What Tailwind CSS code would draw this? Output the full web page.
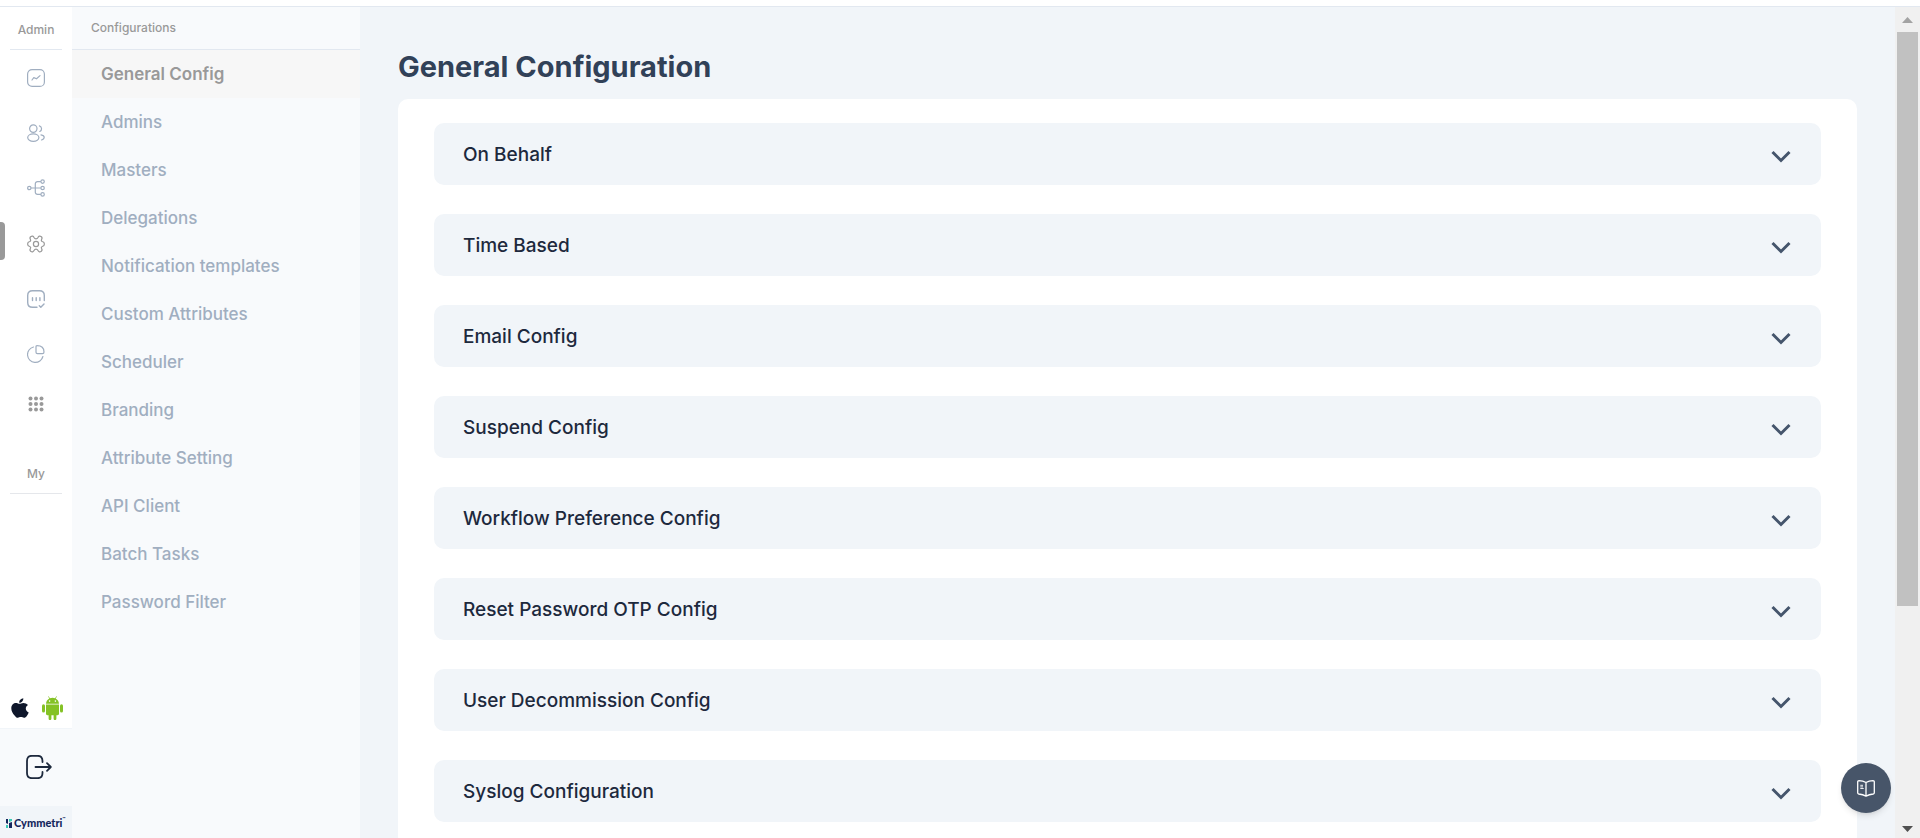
<!DOCTYPE html>
<html lang="en">
<head>
<meta charset="utf-8">
<meta name="viewport" content="width=device-width, initial-scale=1">
<title>General Configuration</title>
<script src="https://cdn.jsdelivr.net/npm/@tailwindcss/browser@4"></script>
</head>
<body class="flex h-screen flex-col overflow-hidden bg-white font-['Inter',sans-serif]">
<div class="h-[7px] shrink-0 border-b border-slate-200"></div>
<div class="flex min-h-0 flex-1">

  <!-- Icon rail -->
  <nav aria-label="Primary" class="flex w-[72px] shrink-0 flex-col text-[#a0aec0]">
    <div class="mx-[10px] flex h-[43px] items-center justify-center border-b border-slate-200 pt-1 text-xs font-medium text-[#999]">Admin</div>
    <div class="flex flex-col pr-px">
      <a href="#" aria-label="Dashboard" class="flex h-[55px] items-center justify-center">
        <svg class="size-[18px]" viewBox="0 0 18 18" fill="none" stroke="currentColor" stroke-width="1.2" stroke-linecap="round" stroke-linejoin="round"><rect x=".6" y=".6" width="16.8" height="16.8" rx="4.5"/><path d="M5 11l1.800-2.400 2.700 1.200L13 6.600"/></svg>
      </a>
      <a href="#" aria-label="Users" class="flex h-[55px] items-center justify-center">
        <svg class="size-[18px]" viewBox="0 0 18 18" fill="none" stroke="currentColor" stroke-width="1.2" stroke-linecap="round"><circle cx="6.3" cy="4.6" r="3.7"/><ellipse cx="6.3" cy="13.6" rx="5.6" ry="3.7"/><path d="M12.400 1.900a3 3 0 0 1 .4 5.600M14 10.800c1.900.3 3.200 1.300 3.200 2.500s-1.100 2.200-2.700 2.700"/></svg>
      </a>
      <a href="#" aria-label="Workflows" class="flex h-14 items-center justify-center">
        <svg class="size-[18px]" viewBox="0 0 18 18" fill="none" stroke="currentColor" stroke-width="1.2"><circle cx="2.3" cy="9" r="1.7"/><circle cx="15.6" cy="2.6" r="1.7"/><circle cx="15.6" cy="9" r="1.7"/><circle cx="15.6" cy="15.4" r="1.7"/><path d="M4 9h9.900M13.900 2.600h-3.400a2.200 2.200 0 0 0-2.200 2.200v8.400a2.200 2.200 0 0 0 2.200 2.200h3.400"/></svg>
      </a>
      <a href="#" aria-label="Configurations" aria-current="page" class="relative flex h-[55px] items-center justify-center text-[#999]">
        <span class="absolute top-[6px] left-0 h-[38px] w-[5px] rounded-r bg-[#999]"></span>
        <svg class="size-[18px]" viewBox="0 0 18 18" fill="none" stroke="currentColor" stroke-width="1.2" stroke-linejoin="round"><circle cx="9" cy="9" r="2.6"/><path d="M7 2.500C6.300 1 4.900.8 3.900 1.600 2.800 2.400 2.700 3.500 3.500 4.700c.4.700.1 1.500-.8 1.800C1.200 6.900.6 7.800.6 9s.6 2.100 2.100 2.500c.9.300 1.200 1.100.8 1.800-.8 1.200-.7 2.300.4 3.100 1 .8 2.400.6 3.100-.9.500-1 .9-1.300 2-1.300s1.500.3 2 1.300c.7 1.500 2.100 1.700 3.100.9 1.100-.8 1.200-1.900.4-3.100-.4-.7-.1-1.500.8-1.800 1.500-.4 2.100-1.300 2.100-2.500s-.6-2.100-2.100-2.500c-.9-.3-1.200-1.100-.8-1.800.8-1.200.7-2.300-.4-3.100-1-.8-2.400-.6-3.100.9-.5 1-.9 1.300-2 1.300s-1.500-.3-2-1.300z"/></svg>
      </a>
      <a href="#" aria-label="Requests" class="flex h-[55px] items-center justify-center">
        <svg class="size-[18px]" viewBox="0 0 18 18" fill="none" stroke="currentColor" stroke-width="1.4" stroke-linecap="round" stroke-linejoin="round"><path d="M17.300 10.500V5.500C17.300 2 16 .7 12.500.7h-7C2 .7.7 2 .7 5.500v7C.7 16 2 17.300 5.500 17.300h4.500M12.300 15.700l1.500 1.500 3.200-3.200M5.500 7.800v2.800M9.200 7.800v2.800M12.900 7.800v2.800"/></svg>
      </a>
      <a href="#" aria-label="Reports" class="flex h-[55px] items-center justify-center">
        <svg class="size-[18px]" viewBox="0 0 18 18" fill="none" stroke="currentColor" stroke-width="1.2" stroke-linejoin="round" stroke-linecap="round"><path d="M10 .7c4.400 0 7 2.200 7 6.300 0 1.300-.5 1.700-1.500 1.700H10.500C9.500 8.700 9 8.200 9 7.300V1.900C9 1 9.300.7 10 .7zM6.500 2A7.800 7.800 0 1 0 15.900 11.500"/></svg>
      </a>
      <a href="#" aria-label="Applications" class="flex h-[46px] items-center justify-center text-[#999]">
        <svg class="size-[16px]" viewBox="0 0 16 16" fill="currentColor"><circle cx="2.500" cy="2.500" r="2"/><circle cx="8" cy="2.500" r="2"/><circle cx="13.500" cy="2.500" r="2"/><circle cx="2.500" cy="8" r="2"/><circle cx="8" cy="8" r="2"/><circle cx="13.500" cy="8" r="2"/><circle cx="2.500" cy="13.500" r="2"/><circle cx="8" cy="13.500" r="2"/><circle cx="13.500" cy="13.500" r="2"/></svg>
      </a>
    </div>
    <div class="mx-[10px] mt-9 flex h-[31px] items-start justify-center border-b border-gray-200 pt-[3px] text-xs font-medium text-[#999]">My</div>

    <div class="mt-auto flex h-[38px] items-start justify-center gap-[13px] pl-[2px]">
      <a href="#" aria-label="iOS app" class="pt-2">
        <svg class="h-[20px] w-[18px] fill-slate-900" viewBox="0 0 18 20"><path d="M12.300.2c.1 1.300-.4 2.400-1.100 3.200-.8.900-1.900 1.400-3 1.300C8.100 3.500 8.600 2.400 9.300 1.700c.8-.9 2-1.400 3-1.500zM17 7.100c-1.400.8-2.200 2-2.200 3.500 0 1.800 1.100 3.200 2.900 3.800-.4 1.300-1.100 2.400-1.900 3.500-.7 1-1.600 1.900-2.800 1.900-1.200 0-1.600-.7-3.100-.7-1.500 0-1.900.7-3.100.7-1.200 0-2.200-1-3-2.100C1.500 15.400.3 12.900.3 10.300.3 6.900 2.600 5 5 5c1.400 0 2.500.8 3.500.8.900 0 2.100-.9 3.900-.9 1.700 0 3.500.8 4.600 2.200z"/></svg>
      </a>
      <a href="#" aria-label="Android app" class="pt-[6px]">
        <svg class="h-[24px] w-[21px] fill-[#84c225]" viewBox="0 0 21 24"><path d="M4 7.800C4.200 5.200 5.400 3.500 7.300 2.500L6.100.5l.5-.3 1.300 2.100c1.700-.7 3.600-.7 5.200 0L14.400.2l.5.3-1.200 2c1.900 1 3.100 2.700 3.300 5.300zM7.600 4.300a.8.800 0 1 0 0 1.600.8.800 0 0 0 0-1.600zm5.800 0a.8.800 0 1 0 0 1.600.8.800 0 0 0 0-1.600z" fill-rule="evenodd"/><path d="M4 8.500h13v9.300c0 .9-.6 1.400-1.400 1.400H14.400v3.200c0 1-.6 1.600-1.400 1.600s-1.400-.6-1.400-1.600v-3.200H9.400v3.200C9.400 23.400 8.800 24 8 24s-1.400-.6-1.400-1.600v-3.200H5.400C4.600 19.200 4 18.700 4 17.800z"/><rect y="8.200" width="3" height="8.400" rx="1.500"/><rect x="18" y="8.200" width="3" height="8.400" rx="1.500"/></svg>
      </a>
    </div>
    <div class="flex h-[78px] items-center justify-center border-t border-slate-100 bg-slate-50 pb-[2px] pl-[6px] text-slate-800">
      <button type="button" aria-label="Log out">
        <svg class="block h-[24px] w-[26px]" viewBox="0 0 26 24" fill="none" stroke="currentColor" stroke-width="1.800" stroke-linecap="round" stroke-linejoin="round"><path d="M16.500 7V6c0-3.500-1.500-5.200-5-5.200H6C2.500.8 1 2.500 1 6v12c0 3.500 1.500 5.200 5 5.200h5.500c3.500 0 5-1.700 5-5.200v-1M9.500 12h15M21 8.200l3.800 3.800-3.800 3.800"/></svg>
      </button>
    </div>
    <div class="flex h-8 items-center gap-[2px] bg-slate-100 pt-[2px] pl-[6px] font-['Lato',sans-serif] text-[11px] font-black text-[#14275e]">
      <svg class="h-[9px] w-[6px] shrink-0" viewBox="0 0 6 9"><path fill="#14275e" d="M0 0h2v5l-2-1zM3 4l3-1v6H3z"/><path fill="#38c9b4" d="M3 0h3v2L3 3zM0 6h2v3H0z"/></svg>
      <span class="flex items-start">Cymmetri<span class="text-[4px] leading-[8px]">™</span></span>
    </div>
  </nav>

  <!-- Configuration sections -->
  <nav aria-label="Configurations" class="w-72 shrink-0 bg-slate-50 text-[17px] font-medium text-[#a0aec0]">
    <h2 class="flex h-[43px] items-center border-b border-slate-200 pl-[19px] text-xs text-[#999]">Configurations</h2>
    <a href="#" aria-current="page" class="flex h-12 items-center bg-[#f7f7f7] pt-[2px] pl-[29px] font-semibold text-[#999]">General Config</a>
    <a href="#" class="flex h-12 items-center pt-[2px] pl-[29px]">Admins</a>
    <a href="#" class="flex h-12 items-center pt-[2px] pl-[29px]">Masters</a>
    <a href="#" class="flex h-12 items-center pt-[2px] pl-[29px]">Delegations</a>
    <a href="#" class="flex h-12 items-center pt-[2px] pl-[29px]">Notification templates</a>
    <a href="#" class="flex h-12 items-center pt-[2px] pl-[29px]">Custom Attributes</a>
    <a href="#" class="flex h-12 items-center pt-[2px] pl-[29px]">Scheduler</a>
    <a href="#" class="flex h-12 items-center pt-[2px] pl-[29px]">Branding</a>
    <a href="#" class="flex h-12 items-center pt-[2px] pl-[29px]">Attribute Setting</a>
    <a href="#" class="flex h-12 items-center pt-[2px] pl-[29px]">API Client</a>
    <a href="#" class="flex h-12 items-center pt-[2px] pl-[29px]">Batch Tasks</a>
    <a href="#" class="flex h-12 items-center pt-[2px] pl-[29px]">Password Filter</a>
  </nav>

  <main class="min-w-0 flex-1 overflow-hidden bg-slate-100 px-[38px] pt-10">
    <h1 class="pb-3 text-[29px] leading-10 font-bold text-slate-700">General Configuration</h1>
    <div class="flex flex-col gap-[29px] rounded-[10px] bg-white px-9 py-6 text-[19px] font-medium text-slate-800">
      <button type="button" class="flex h-[62px] items-center justify-between rounded-[10px] bg-slate-100 pt-[2px] pr-[30px] pl-[29px]">On Behalf<svg class="mt-[2px] h-[13px] w-5 text-slate-600" viewBox="0 0 20 13" fill="none" stroke="currentColor" stroke-width="3"><path d="M1.500 2l8.500 8.500L18.500 2"/></svg></button>
      <button type="button" class="flex h-[62px] items-center justify-between rounded-[10px] bg-slate-100 pt-[2px] pr-[30px] pl-[29px]">Time Based<svg class="mt-[2px] h-[13px] w-5 text-slate-600" viewBox="0 0 20 13" fill="none" stroke="currentColor" stroke-width="3"><path d="M1.500 2l8.500 8.500L18.500 2"/></svg></button>
      <button type="button" class="flex h-[62px] items-center justify-between rounded-[10px] bg-slate-100 pt-[2px] pr-[30px] pl-[29px]">Email Config<svg class="mt-[2px] h-[13px] w-5 text-slate-600" viewBox="0 0 20 13" fill="none" stroke="currentColor" stroke-width="3"><path d="M1.500 2l8.500 8.500L18.500 2"/></svg></button>
      <button type="button" class="flex h-[62px] items-center justify-between rounded-[10px] bg-slate-100 pt-[2px] pr-[30px] pl-[29px]">Suspend Config<svg class="mt-[2px] h-[13px] w-5 text-slate-600" viewBox="0 0 20 13" fill="none" stroke="currentColor" stroke-width="3"><path d="M1.500 2l8.500 8.500L18.500 2"/></svg></button>
      <button type="button" class="flex h-[62px] items-center justify-between rounded-[10px] bg-slate-100 pt-[2px] pr-[30px] pl-[29px]">Workflow Preference Config<svg class="mt-[2px] h-[13px] w-5 text-slate-600" viewBox="0 0 20 13" fill="none" stroke="currentColor" stroke-width="3"><path d="M1.500 2l8.500 8.500L18.500 2"/></svg></button>
      <button type="button" class="flex h-[62px] items-center justify-between rounded-[10px] bg-slate-100 pt-[2px] pr-[30px] pl-[29px]">Reset Password OTP Config<svg class="mt-[2px] h-[13px] w-5 text-slate-600" viewBox="0 0 20 13" fill="none" stroke="currentColor" stroke-width="3"><path d="M1.500 2l8.500 8.500L18.500 2"/></svg></button>
      <button type="button" class="flex h-[62px] items-center justify-between rounded-[10px] bg-slate-100 pt-[2px] pr-[30px] pl-[29px]">User Decommission Config<svg class="mt-[2px] h-[13px] w-5 text-slate-600" viewBox="0 0 20 13" fill="none" stroke="currentColor" stroke-width="3"><path d="M1.500 2l8.500 8.500L18.500 2"/></svg></button>
      <button type="button" class="flex h-[62px] items-center justify-between rounded-[10px] bg-slate-100 pt-[2px] pr-[30px] pl-[29px]">Syslog Configuration<svg class="mt-[2px] h-[13px] w-5 text-slate-600" viewBox="0 0 20 13" fill="none" stroke="currentColor" stroke-width="3"><path d="M1.500 2l8.500 8.500L18.500 2"/></svg></button>
    </div>
  </main>

  <!-- Scrollbar -->
  <div aria-hidden="true" class="flex w-[25px] shrink-0 flex-col items-center bg-[#f0f0f0]">
    <div class="flex h-[25px] shrink-0 items-center"><svg class="h-[6px] w-[11px] fill-[#a3a3a3]" viewBox="0 0 11 6"><path d="M5.500 0L11 6H0z"/></svg></div>
    <div class="w-[21px] flex-[574] bg-[#c1c1c1]"></div>
    <div class="flex-[207]"></div>
    <div class="flex h-[25px] shrink-0 items-center pt-[6px]"><svg class="h-[6px] w-[11px] fill-[#505050]" viewBox="0 0 11 6"><path d="M0 0h11L5.500 6z"/></svg></div>
  </div>
</div>

<!-- Floating help button -->
<button type="button" aria-label="Documentation" class="fixed right-[29px] bottom-[25px] flex size-[50px] items-center justify-center rounded-full bg-[#475569] text-white shadow-md">
  <svg class="h-[17px] w-[18px]" viewBox="0 0 18 17" fill="none" stroke="currentColor" stroke-width="1.300" stroke-linejoin="round"><path d="M9 2.500C6.800 1.300 4.500.8 2 .7 1.200.7.700 1.100.7 1.900v10.900c0 .7.400 1.100 1.100 1.200 2.600.2 4.900.8 7.200 2.100 2.300-1.300 4.600-1.900 7.200-2.100.7-.1 1.100-.5 1.100-1.200V1.900c0-.8-.5-1.200-1.300-1.200-2.500.1-4.800.6-7 1.800zM9 2.500v13.600"/><path stroke-width=".9" d="M3.300 5.300h2.700M3.300 6.900h2.700M3.300 8.500h3.400"/></svg>
</button>
</body>
</html>
